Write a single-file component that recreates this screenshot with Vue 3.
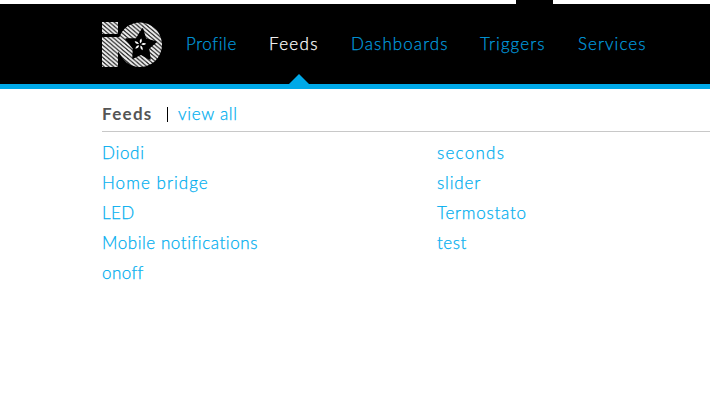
<script setup>
const nav = [
  { label: 'Profile', width: 51, spacing: 0.6 },
  { label: 'Feeds', width: 50, spacing: 1.3, active: true },
  { label: 'Dashboards', width: 97, spacing: 1.08 },
  { label: 'Triggers', width: 65, spacing: 1.1 },
  { label: 'Services', width: 69, spacing: 1.05 },
]
const columns = [
  [['Diodi', 0.7], ['Home bridge', 1.05], ['LED', 0.4], ['Mobile notifications', 0.56], ['onoff', 0.4]],
  [['seconds', 1.25], ['slider', 0.85], ['Termostato', 0.75], ['test', 0.5]],
]
</script>

<template>
  <div class="page">
    <div class="tab"></div>
    <header class="header">
      <svg class="logo" width="61" height="46" viewBox="0 0 61 46">
        <defs>
          <pattern id="stripes" width="4.8" height="4.1" patternUnits="userSpaceOnUse">
            <path d="M-4.800 -4.100L9.600 8.200M-4.800 0L4.800 8.200M0 -4.100L9.600 4.100" stroke="#eee" stroke-width="2.1" />
          </pattern>
        </defs>
        <path d="M0 0h16v12H0zM0 15h17.400A22 22.300 0 1 1 18.500 33L16 29.500V45H0z" fill="url(#stripes)" />
        <path d="M40.500 7L43.500 17L54 20L46.500 26.500L48 37L39 32L31 36L31.500 26.500L24 17L34.500 17Z" fill="#000" stroke="#000" stroke-width="1.5" stroke-linejoin="round" />
        <g fill="#fff" transform="translate(38 22.500) rotate(12)">
          <path v-for="a in [0, 72, 144, 216, 288]" :key="a" :transform="`rotate(${a})`" d="M0 -1.200Q-2 -3.700 0 -6.200Q2 -3.700 0 -1.200" />
        </g>
      </svg>
      <nav class="nav">
        <a v-for="item in nav" :key="item.label" :class="{ active: item.active }" :style="{ width: item.width + 'px', letterSpacing: item.spacing + 'px' }">{{ item.label }}</a>
      </nav>
    </header>
    <main class="content">
      <div class="heading"><strong>Feeds</strong><i class="divider"></i><a>view all</a></div>
      <div class="columns">
        <ul v-for="(column, i) in columns" :key="i">
          <li v-for="[feed, spacing] in column" :key="feed" :style="{ letterSpacing: spacing + 'px' }">{{ feed }}</li>
        </ul>
      </div>
    </main>
  </div>
</template>

<style>
body { margin: 0; background: #fff; }
</style>
<style scoped>
.page { height: 400px; overflow: hidden; font: 300 17px/30px Lato, "Open Sans", sans-serif; letter-spacing: .5px; color: #00aeef; font-variant-ligatures: none; white-space: nowrap; -webkit-text-stroke: .25px currentColor; }
.tab { width: 37px; height: 4px; margin-left: 516px; background: #000; }
.header { display: flex; box-sizing: border-box; height: 85px; padding: 18px 0 0 102px; background: #000; border-bottom: 5px solid #00a9e8; }
.logo { flex: none; display: block; }
.nav { display: flex; gap: 32px; margin: 7px 0 0 23px; color: #0099dc; }
.nav a { position: relative; }
.nav a:nth-child(n+5) { left: 1px; }
.nav a.active { color: #fff; }
.active::after { content: ""; position: absolute; left: 20px; top: 45px; width: 20px; height: 10px; background: #00a9e8; clip-path: polygon(50% 0, 100% 100%, 0 100%); }
.content { margin-left: 102px; }
.heading { display: flex; align-items: center; box-sizing: border-box; height: 43px; padding-top: 8px; border-bottom: 1px solid #c8c8c8; }
.heading strong { width: 51px; color: #555; font-weight: 700; letter-spacing: 1.3px; -webkit-text-stroke: 0; }
.heading a { letter-spacing: .7px; }
.divider { width: 1px; height: 15px; margin: 0 10px 0 14px; background: #000; }
.columns { display: grid; grid-template-columns: 335px 273px; padding-top: 6px; }
ul { list-style: none; margin: 0; padding: 0; }
</style>
